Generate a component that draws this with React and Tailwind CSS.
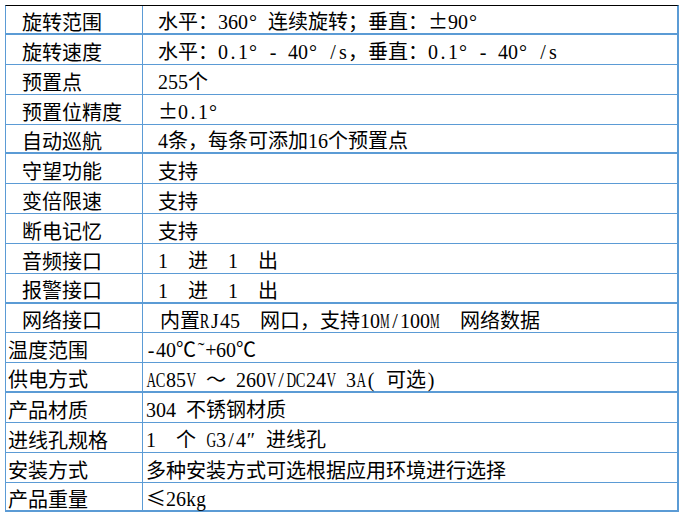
import React from "react";

const rows = [
  { k: "旋转范围", v: "水平：360° 连续旋转；垂直：±90°", h: "h-[29px]", thick: true, ind: true },
  { k: "旋转速度", v: "水平：0.1° - 40° /s，垂直：0.1° - 40° /s", h: "h-[30px]", ind: true },
  { k: "预置点", v: "255个", h: "h-[30px]", ind: true },
  { k: "预置位精度", v: "±0.1°", h: "h-[30px]", ind: true },
  { k: "自动巡航", v: "4条，每条可添加16个预置点", h: "h-[29px]", thick: true, ind: true },
  { k: "守望功能", v: "支持", h: "h-[30px]", ind: true },
  { k: "变倍限速", v: "支持", h: "h-[30px]", ind: true },
  { k: "断电记忆", v: "支持", h: "h-[30px]", ind: true },
  { k: "音频接口", v: "1　进　1　出", h: "h-[30px]", ind: true },
  { k: "报警接口", v: "1　进　1　出", h: "h-[30px]", thick: true, ind: true },
  { k: "网络接口", v: "内置RJ45　网口，支持10M/100M　网络数据", h: "h-[29px]", ind: true, net: true },
  { k: "温度范围", v: "-40℃~+60℃", h: "h-[30px]" },
  { k: "供电方式", v: "AC85V ～ 260V/DC24V 3A( 可选)", h: "h-[30px]", thick: true },
  { k: "产品材质", v: "304 不锈钢材质", h: "h-[30px]" },
  { k: "进线孔规格", v: "1　个 G3/4″ 进线孔", h: "h-[30px]" },
  { k: "安装方式", v: "多种安装方式可选根据应用环境进行选择", h: "h-[30px]" },
  { k: "产品重量", v: "≤26kg", h: "h-[29px]", thick: true },
];

// Times advance widths (per 1000 em) for letters wider than a half cell
const W = { M: 889, R: 667, J: 389, A: 722, C: 667, V: 722, D: 722, G: 722, s: 389, k: 500, g: 500 };

function Cells({ text }) {
  const out = [];
  let buf = "";
  const flush = (key) => {
    if (buf) {
      out.push(
        <span key={"c" + key} className="font-['Noto_Sans_CJK_SC',sans-serif]">
          {buf}
        </span>
      );
      buf = "";
    }
  };
  [...text].forEach((ch, i) => {
    const code = ch.charCodeAt(0);
    const half = code < 128 || ch === "°" || ch === "″";
    const wide = ch === "±" || ch === "≤";
    if (half) {
      flush(i);
      const w = W[ch] ? (W[ch] * 20) / 1000 : 0;
      const sx = w > 9.6 ? 9.6 / w : 1;
      out.push(
        <span key={i} className="inline-flex justify-center w-[10px] font-['Liberation_Serif',serif]">
          <span className="inline-block" style={sx < 1 ? { transform: `scaleX(${sx.toFixed(3)})` } : undefined}>
            {ch === " " ? "\u00a0" : ch === "~" ? "˜" : ch}
          </span>
        </span>
      );
    } else if (wide) {
      flush(i);
      out.push(
        <span key={i} className="inline-flex justify-center w-[20px] font-['Noto_Sans_CJK_SC',sans-serif]">
          {ch}
        </span>
      );
    } else {
      buf += ch;
    }
  });
  flush("end");
  return <span className="whitespace-pre">{out}</span>;
}

export default function App() {
  return (
    <div className="w-[686px] h-[518px] bg-white pl-[5px] pt-[5px]">
      <div className="w-[674px] border-t border-t-black border-l border-l-[#5b9bd5] border-r-2 border-r-[#5b9bd5] text-[20px] text-black leading-none font-['Noto_Sans_CJK_SC',sans-serif]">
        {rows.map((r, i) => (
          <div
            key={i}
            className={`flex ${r.h} ${r.thick ? "border-b-2" : "border-b"} border-[#5b9bd5]`}
          >
            <div
              className={`w-[137px] shrink-0 border-r border-[#5b9bd5] flex items-center pt-[4px] ${r.ind ? "pl-[16px]" : "pl-[2px]"}`}
            >
              {r.k}
            </div>
            <div
              className={`flex-1 flex items-center pt-[4px] ${r.net ? "pl-[17px]" : r.ind ? "pl-[15px]" : "pl-[3px]"}`}
            >
              <Cells text={r.v} />
            </div>
          </div>
        ))}
      </div>
    </div>
  );
}
